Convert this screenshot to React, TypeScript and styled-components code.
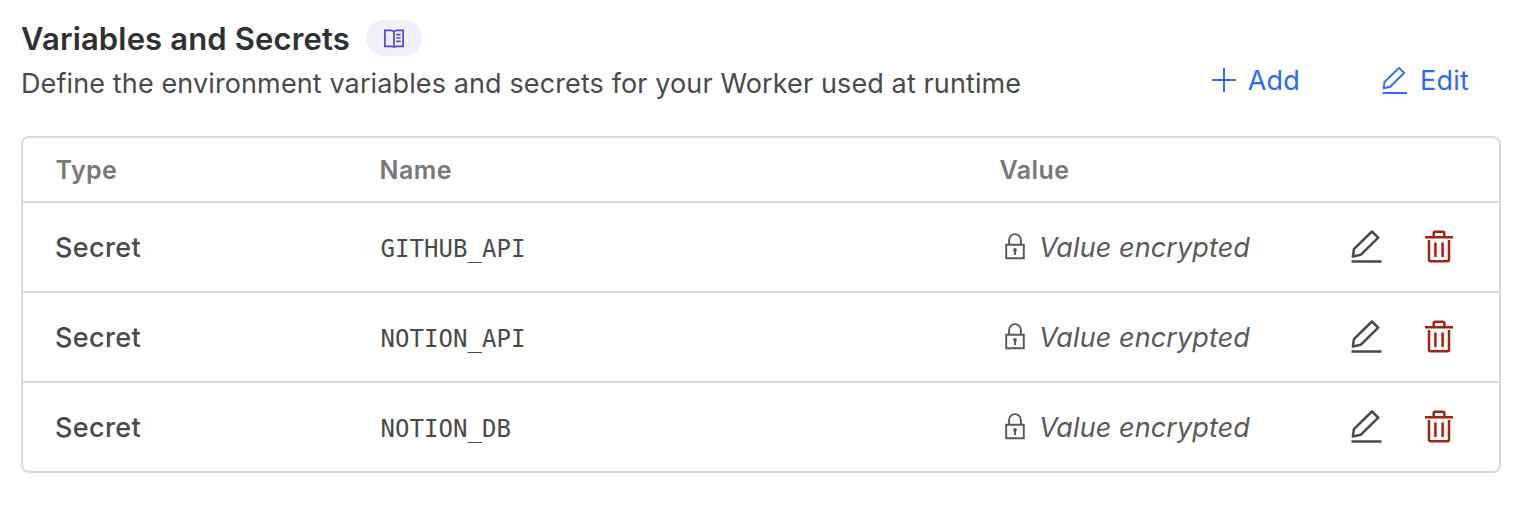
import React from 'react';
import styled, { createGlobalStyle } from 'styled-components';

const GlobalStyle = createGlobalStyle`
  * { box-sizing: border-box; }
  body {
    margin: 0;
    background: #fff;
    color: #4a4a4a;
    font-family: Inter, "Liberation Sans", sans-serif;
  }
`;

const Section = styled.section`
  padding: 20px 35px 0 21px;
`;

const Header = styled.header`
  display: flex;
  justify-content: space-between;
  height: 116px;
`;

const TitleRow = styled.div`
  display: flex;
  align-items: center;
  gap: 16px;
  height: 36px;
`;

const Title = styled.h2`
  margin: 0;
  padding-top: 2px;
  width: 329px;
  font-size: 31px;
  font-weight: 600;
  line-height: 38px;
  letter-spacing: 0.15px;
  white-space: nowrap;
  color: #313131;
`;

const DocsBadge = styled.a`
  display: flex;
  align-items: center;
  justify-content: center;
  width: 56px;
  height: 36px;
  padding-top: 1px;
  border-radius: 18px;
  background: #f1effb;
  color: #5746d6;
`;

const Description = styled.p`
  margin: 10px 0 0;
  font-size: 27px;
  line-height: 36px;
  letter-spacing: 0.115px;
  white-space: nowrap;
`;

const Actions = styled.div`
  display: flex;
  align-items: center;
  gap: 82px;
  height: 40px;
  margin: 40px 32px 0 0;
`;

const Action = styled.button`
  display: flex;
  align-items: center;
  gap: 12px;
  padding: 0;
  border: 0;
  background: none;
  color: #2c6bf5;
  font: 400 27px/36px Inter, sans-serif;
  letter-spacing: 0.2px;
`;

const ActionLabel = styled.span`
  padding-top: 2px;
`;

const Table = styled.div`
  border: 2px solid #d9d9d9;
  border-radius: 8px;
`;

const Row = styled.div<{ $head?: boolean }>`
  display: grid;
  grid-template-columns: 324px 620px 1fr auto;
  align-items: center;
  height: ${p => (p.$head ? 65 : 90)}px;
  padding: 0 46px 0 33px;
  border-bottom: 2px solid #d9d9d9;
  &:last-child { height: 88px; border-bottom: 0; }
`;

const HeadCell = styled.div`
  margin-left: -0.5px;
  font-size: 25px;
  font-weight: 600;
  line-height: 32px;
  letter-spacing: 0.45px;
  color: #797979;
`;

const TypeCell = styled.div`
  margin-left: -1px;
  padding-top: 2px;
  font-size: 27px;
  font-weight: 500;
  line-height: 36px;
  letter-spacing: 0.35px;
`;

const NameCell = styled.div`
  padding: 4px 0 0 0.5px;
  font: 24px/32px "DejaVu Sans Mono", monospace;
  letter-spacing: 0.06px;
`;

const ValueCell = styled.div`
  display: flex;
  align-items: center;
  gap: 13px;
  padding-left: 4px;
  color: #595959;
  font-size: 27px;
  font-style: italic;
  line-height: 36px;
  letter-spacing: 0.1px;
`;

const ValueText = styled.span`
  padding-top: 2px;
`;

const RowActions = styled.div`
  display: flex;
  align-items: center;
  gap: 43px;
  padding-bottom: 1px;
`;

const IconButton = styled.button<{ $danger?: boolean }>`
  display: flex;
  padding: 0;
  border: 0;
  background: none;
  color: ${p => (p.$danger ? '#a8200f' : '#4a4a4a')};
`;

const Icon = styled.svg`
  display: block;
  flex: none;
  fill: none;
  stroke: currentColor;
`;

const BookIcon = () => (
  <Icon width="22" height="20" viewBox="0 0 22 20" strokeWidth="1.7">
    <path d="M11 3C10.300 1.900 9.400 1.400 8 1.400H1.900v15.900H8c1.600 0 2.200.9 3 .9s1.400-.9 3-.9h6.100V1.400H14c-1.400 0-2.300.5-3 1.600ZM11 3v15" />
    <path d="M13.300 5.700h4.300M13.300 9h4.300M13.300 12.300h4.300" />
  </Icon>
);

const PlusIcon = () => (
  <Icon width="24" height="24" viewBox="0 0 24 24" strokeWidth="2">
    <path d="M12 0v24M0 12h24" />
  </Icon>
);

const PencilIcon = () => (
  <Icon width="31" height="33" viewBox="0 0 31 33" strokeWidth="2.500" strokeLinejoin="round">
    <path d="M20.900 1.500 27.200 7.600 9.700 24.800 1.900 26.500 2.900 19.200Z" />
    <path d="M.5 31.500H30.500" />
  </Icon>
);

const SmallPencilIcon = () => (
  <Icon width="26" height="28" viewBox="0 0 26 28" strokeWidth="1.900" strokeLinejoin="round">
    <path d="M17 1.900 22.200 6.900 8.200 20.700 1.700 22.200 2.500 16Z" />
    <path d="M.8 27H25" strokeWidth="2" />
  </Icon>
);

const TrashIcon = () => (
  <Icon width="28" height="33" viewBox="0 0 28 33" strokeWidth="2.500">
    <path d="M0 7.200h28M8.700 7.200V3.200q0-1.500 1.500-1.500h7.600q1.500 0 1.500 1.500v4M4 10v19.600q0 1.700 1.700 1.700h16.600q1.700 0 1.700-1.700V10M10.400 12.500v14.500M17.600 12.500v14.500" />
  </Icon>
);

const LockIcon = () => (
  <Icon width="22" height="28" viewBox="0 0 22 28" strokeWidth="1.900">
    <path d="M2.200 11.800h17.600v13.500H2.200zM5.100 11.800V7a5.900 5.900 0 0 1 11.800 0V11.800" />
    <circle cx="11" cy="16.800" r="1.900" fill="currentColor" stroke="none" />
    <path d="M11 17v5" />
  </Icon>
);

const secrets = ['GITHUB_API', 'NOTION_API', 'NOTION_DB'];

export default function App() {
  return (
    <>
      <GlobalStyle />
      <Section>
        <Header>
          <div>
            <TitleRow>
              <Title>Variables and Secrets</Title>
              <DocsBadge aria-label="Documentation"><BookIcon /></DocsBadge>
            </TitleRow>
            <Description>
              Define the environment variables and secrets for your Worker used at runtime
            </Description>
          </div>
          <Actions>
            <Action><PlusIcon /><ActionLabel>Add</ActionLabel></Action>
            <Action><SmallPencilIcon /><ActionLabel>Edit</ActionLabel></Action>
          </Actions>
        </Header>
        <Table>
          <Row $head>
            <HeadCell>Type</HeadCell>
            <HeadCell>Name</HeadCell>
            <HeadCell>Value</HeadCell>
          </Row>
          {secrets.map(name => (
            <Row key={name}>
              <TypeCell>Secret</TypeCell>
              <NameCell>{name}</NameCell>
              <ValueCell><LockIcon /><ValueText>Value encrypted</ValueText></ValueCell>
              <RowActions>
                <IconButton aria-label="Edit"><PencilIcon /></IconButton>
                <IconButton $danger aria-label="Delete"><TrashIcon /></IconButton>
              </RowActions>
            </Row>
          ))}
        </Table>
      </Section>
    </>
  );
}
